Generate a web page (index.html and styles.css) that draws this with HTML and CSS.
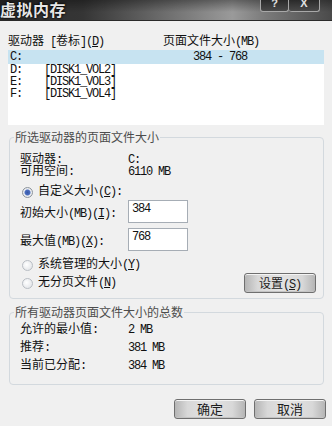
FILE: index.html
```html
<!DOCTYPE html>
<html lang="zh-CN">
<head>
    <meta charset="UTF-8">
    <meta name="viewport" content="width=device-width, initial-scale=1.0">
    <title>虚拟内存</title>
    <link rel="stylesheet" href="styles.css">
</head>
<body>
    <div class="window">
        <div class="titlebar">
            <span class="title">虚拟内存</span>
            <div class="caption-btns">
                <span class="cap-btn">?</span>
                <span class="cap-btn">X</span>
            </div>
        </div>

        <div class="list-head">
            <span class="col-drive">驱动器<span class="en"> [</span>卷标<span class="en">](<u>D</u>)</span></span>
            <span class="col-size">页面文件大小<span class="en">(MB)</span></span>
        </div>

        <div class="drive-list">
            <div class="drive-row selected">
                <span class="d-letter en">C:</span>
                <span class="d-label en"></span>
                <span class="d-size en">384 - 768</span>
            </div>
            <div class="drive-row">
                <span class="d-letter en">D:</span>
                <span class="d-label en">[DISK1_VOL2]</span>
                <span class="d-size en"></span>
            </div>
            <div class="drive-row">
                <span class="d-letter en">E:</span>
                <span class="d-label en">[DISK1_VOL3]</span>
                <span class="d-size en"></span>
            </div>
            <div class="drive-row">
                <span class="d-letter en">F:</span>
                <span class="d-label en">[DISK1_VOL4]</span>
                <span class="d-size en"></span>
            </div>
        </div>

        <fieldset class="group group-drive">
            <legend>所选驱动器的页面文件大小</legend>

            <div class="info-row">
                <span>驱动器<span class="en">:</span></span>
                <span class="en">C:</span>
            </div>
            <div class="info-row">
                <span>可用空间<span class="en">:</span></span>
                <span class="en">6110 MB</span>
            </div>

            <div class="radio-row first">
                <span class="radio checked"></span>
                <span>自定义大小<span class="en">(<u>C</u>):</span></span>
            </div>

            <div class="input-row">
                <span>初始大小<span class="en">(MB)(<u>I</u>):</span></span>
                <input type="text" class="num-input en" value="384">
            </div>
            <div class="input-row second">
                <span>最大值<span class="en">(MB)(<u>X</u>):</span></span>
                <input type="text" class="num-input en" value="768">
            </div>

            <div class="radio-row third">
                <span class="radio"></span>
                <span>系统管理的大小<span class="en">(<u>Y</u>)</span></span>
            </div>

            <div class="last-row">
                <div class="radio-row">
                    <span class="radio"></span>
                    <span>无分页文件<span class="en">(<u>N</u>)</span></span>
                </div>
                <button class="btn btn-set">设置<span class="en">(<u>S</u>)</span></button>
            </div>
        </fieldset>

        <fieldset class="group group-total">
            <legend>所有驱动器页面文件大小的总数</legend>

            <div class="info-row">
                <span>允许的最小值<span class="en">:</span></span>
                <span class="en">2 MB</span>
            </div>
            <div class="info-row">
                <span>推荐<span class="en">:</span></span>
                <span class="en">381 MB</span>
            </div>
            <div class="info-row">
                <span>当前已分配<span class="en">:</span></span>
                <span class="en">384 MB</span>
            </div>
        </fieldset>

        <div class="actions">
            <button class="btn btn-dialog">确定</button>
            <button class="btn btn-dialog">取消</button>
        </div>
    </div>
</body>
</html>
```

FILE: styles.css
```css
body {
    margin: 0;
    padding: 0;
    background-color: #f0f0f0;
    font-family: "Liberation Mono", "Noto Sans CJK SC", monospace;
    font-size: 12px;
    color: #111;
}

.window {
    width: 332px;
    height: 426px;
    overflow: hidden;
}

/* title bar */
.titlebar {
    height: 20px;
    display: flex;
    justify-content: space-between;
    align-items: flex-start;
    background:
        linear-gradient(to bottom, rgba(0, 0, 0, 0.35), rgba(0, 0, 0, 0) 60%),
        linear-gradient(to right, #2e2e2e 0%, #353535 25%, #6e6e6e 50%, #9a9a9a 70%, #7a7a7a 80%, #4a4a4a 100%);
    border-bottom: 1px solid #2a2a2a;
}

.title {
    font-family: "Noto Sans CJK SC", sans-serif;
    font-weight: bold;
    font-size: 16px;
    line-height: 19px;
    letter-spacing: 0.5px;
    color: #e6e6e6;
    text-shadow: 0 0 3px #000, 0 0 2px #000;
}

.caption-btns {
    display: flex;
    margin-right: 12px;
}

.cap-btn {
    width: 27px;
    height: 11px;
    border: 1px solid #a8a8a8;
    border-top: none;
    border-radius: 0 0 3px 3px;
    background: linear-gradient(to bottom, #2a2a2a, #4a4a4a);
    color: #e0e0e0;
    font-family: "Liberation Sans", sans-serif;
    font-weight: bold;
    font-size: 11px;
    line-height: 7px;
    text-align: center;
    overflow: hidden;
}

.cap-btn + .cap-btn {
    width: 30px;
    border-left: none;
}

.en {
    letter-spacing: -1.2px;
}

/* drive list */
.list-head {
    display: flex;
    padding: 14px 0 0 8px;
    line-height: 14px;
    height: 14px;
}

.col-drive {
    width: 155px;
}

.drive-list {
    margin: 1px 8px 0 8px;
    height: 75px;
    background: #fff;
}

.drive-row {
    display: flex;
    line-height: 12px;
    padding-left: 2px;
}

.drive-row.selected {
    line-height: 14px;
    background: #c7e3f1;
}

.d-letter {
    width: 34px;
}

.d-label {
    width: 149px;
}

/* group boxes */
.group {
    margin: 5px 8px 0 9px;
    padding: 10px 7px 5px 10px;
    border: 1px solid #d3d9de;
    border-radius: 4px;
    min-width: 0;
}

.group legend {
    font-family: "Noto Sans CJK SC", sans-serif;
    color: #4c4c4c;
    line-height: 14px;
    padding: 0 1px;
    margin-left: -6px;
}

.info-row {
    display: grid;
    grid-template-columns: 108px auto;
    line-height: 12px;
}

.group-total {
    margin-top: 6px;
    padding: 2px 7px 9px 10px;
}

.group-total .info-row {
    line-height: 18px;
}

.radio-row {
    display: flex;
    align-items: center;
    gap: 5px;
    margin-left: 2px;
    line-height: 12px;
}

.radio-row.first {
    margin-top: 8px;
}

.radio-row.third {
    margin-top: 8px;
}

.radio {
    width: 9px;
    height: 9px;
    border-radius: 50%;
    border: 1px solid #b9bec4;
    background: radial-gradient(circle at 40% 40%, #ffffff, #dcdfe3);
}

.radio.checked {
    border-color: #8d949c;
    background: radial-gradient(circle, #3757a6 0, #4a6ec0 2.5px, #eef0f3 3.5px, #d3d7dc 100%);
}

.input-row {
    display: grid;
    grid-template-columns: 108px 60px;
    align-items: center;
    margin-top: 2px;
}

.input-row.second {
    margin-top: 5px;
}

.num-input {
    box-sizing: border-box;
    width: 60px;
    height: 23px;
    border: 1px solid #a6adb5;
    padding: 2px 3px 7px;
    font-family: "Liberation Mono", monospace;
    font-size: 12px;
    color: #111;
    background: #fff;
    outline: none;
}

.last-row {
    display: flex;
    justify-content: space-between;
    align-items: center;
    margin-top: 2px;
    height: 20px;
}

/* buttons */
.btn {
    box-sizing: border-box;
    width: 72px;
    height: 20px;
    padding: 0;
    border: 1px solid #6f6f6f;
    border-radius: 3px;
    background: linear-gradient(to right, #b5b5b5 0%, #d8d8d8 18%, #e3e3e3 50%, #d8d8d8 82%, #b5b5b5 100%);
    box-shadow: inset 0 1px 0 #f4f4f4, inset 0 -1px 0 #c4c4c4;
    font-family: "Liberation Mono", "Noto Sans CJK SC", monospace;
    font-size: 12px;
    color: #1c1c1c;
    cursor: pointer;
}

.btn-dialog {
    width: 72px;
    font-family: "Noto Sans CJK SC", sans-serif;
    font-size: 13px;
    line-height: 16px;
}

.actions {
    display: flex;
    justify-content: flex-end;
    gap: 8px;
    margin: 14px 6px 0 0;
}
```
